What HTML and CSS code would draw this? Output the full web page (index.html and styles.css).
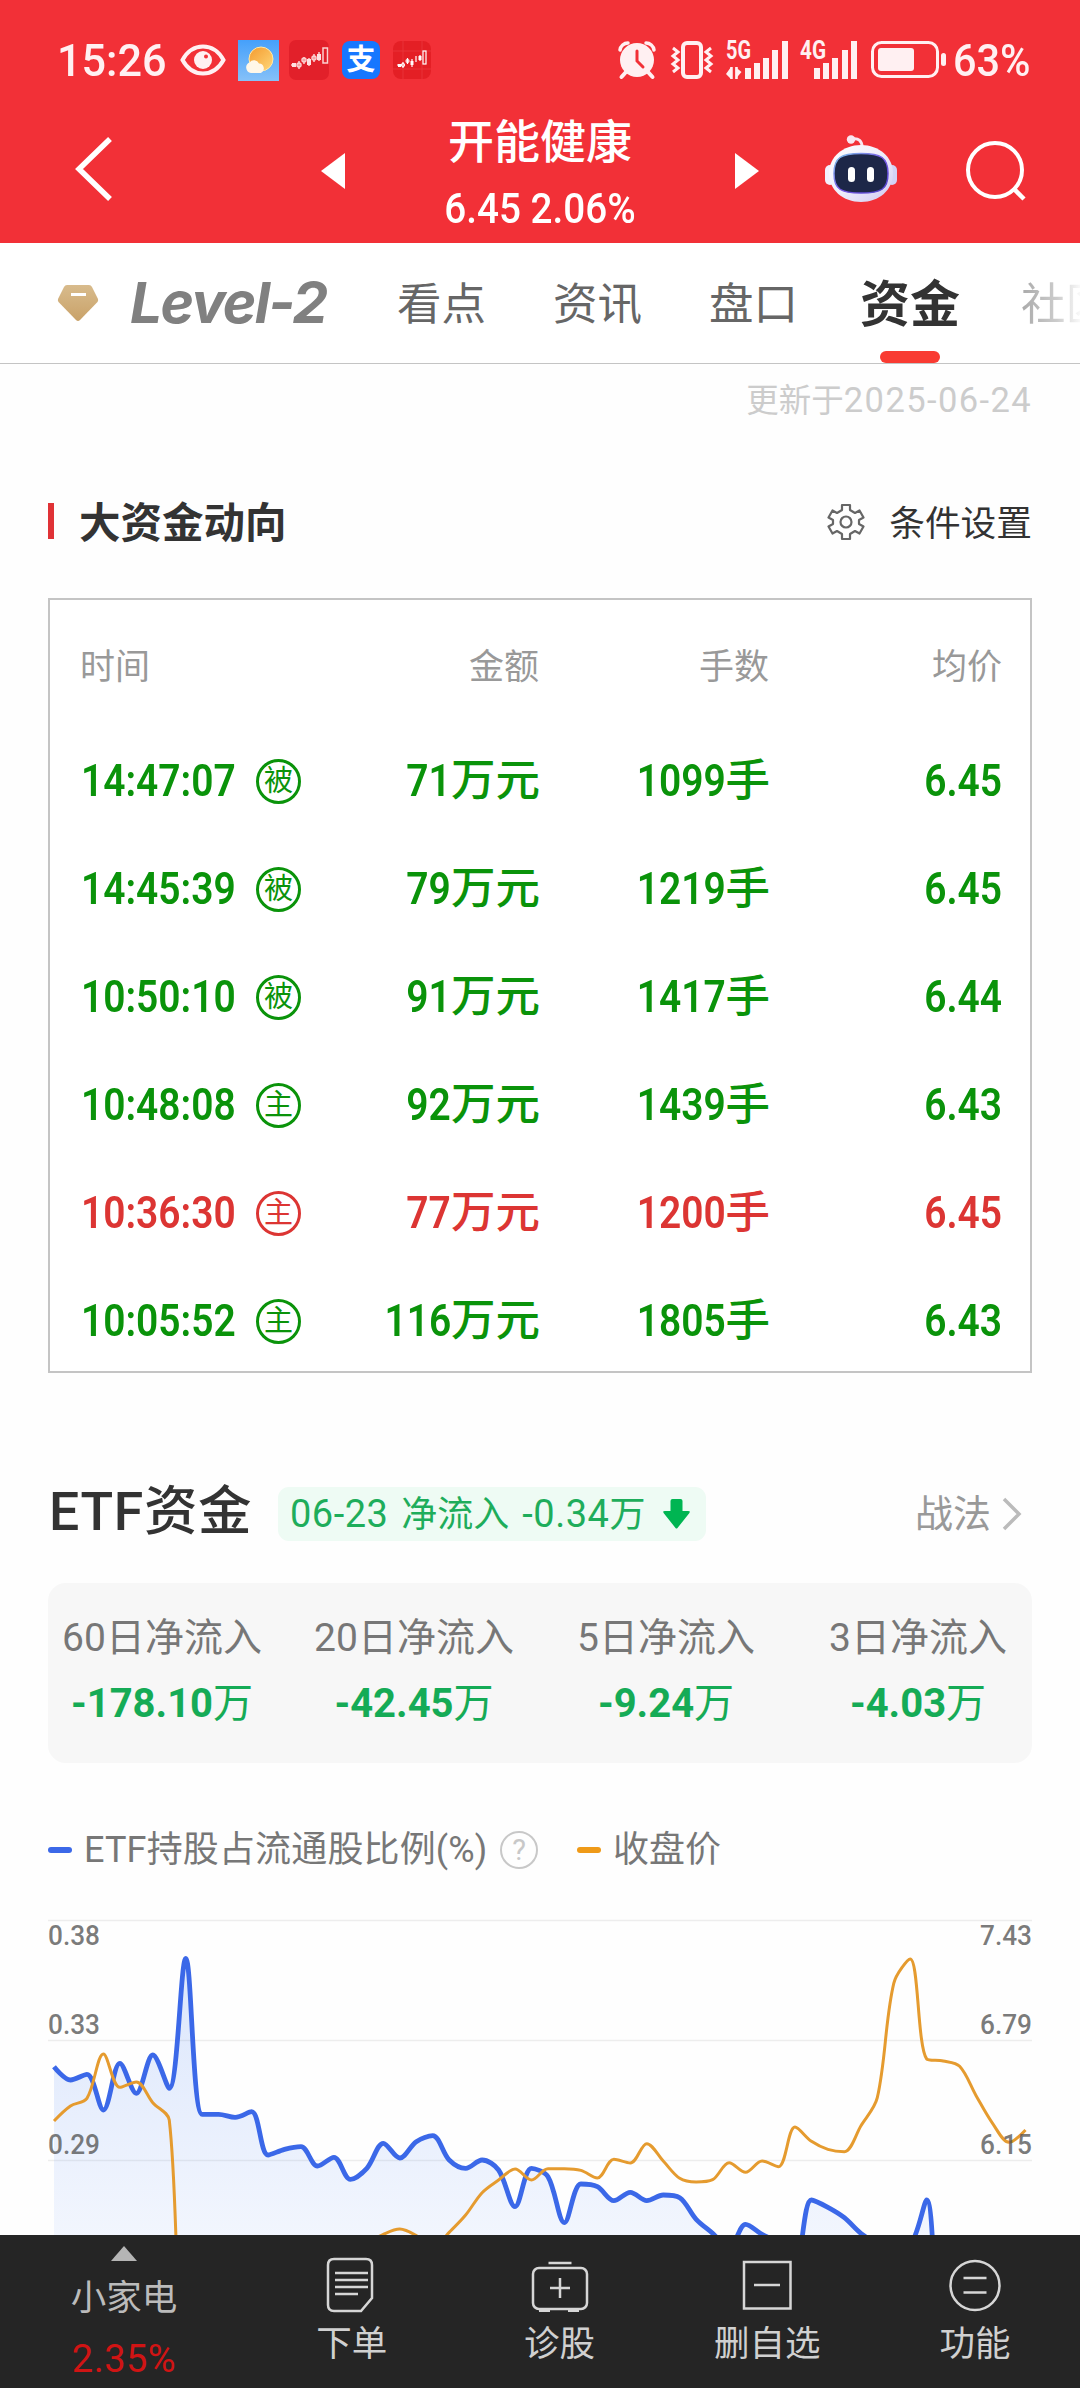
FILE: index.html
```html
<!DOCTYPE html>
<html lang="zh-CN">
<head>
<meta charset="utf-8">
<title>开能健康</title>
<link rel="stylesheet" href="styles.css">
</head>
<body>
<div class="screen">
  <header class="top">
    <div class="status">
      <div class="status-left">
        <span class="clock">15:26</span>
        <svg class="eye" width="46" height="32" viewBox="0 0 46 32"><path d="M2.500 16C8 6 15 2.500 23 2.500S38 6 43.500 16C38 26 31 29.500 23 29.500S8 26 2.500 16Z" fill="none" stroke="#fff0f2" stroke-width="4"/><circle cx="23" cy="16" r="9" fill="#fff0f2"/><circle cx="26" cy="12.500" r="2" fill="#f23037"/></svg>
        <svg class="weather" width="41" height="41" viewBox="0 0 41 41"><defs><linearGradient id="sky" x1="0" y1="0" x2="0" y2="1"><stop offset="0" stop-color="#45a0fb"/><stop offset="1" stop-color="#86c1f8"/></linearGradient><linearGradient id="sun" x1="0" y1="0" x2="1" y2="1"><stop offset="0" stop-color="#f49a2e"/><stop offset="1" stop-color="#ffd778"/></linearGradient></defs><rect width="41" height="41" fill="url(#sky)"/><circle cx="23" cy="19" r="12" fill="url(#sun)" stroke="#ffe9a8" stroke-width="1"/><path d="M13 33a5.500 5.500 0 0 1-1.500-10.500A5.500 5.500 0 0 1 21 23.500a5 5 0 0 1 2 9.500Z" fill="#fff7e8"/></svg>
        <svg class="stock-a" width="40" height="40" viewBox="0 0 40 40"><rect width="40" height="40" rx="7" fill="#e2202a"/><g stroke="#fbd0d0" stroke-width="1.500" fill="none"><path d="M2 25h5M10 21v8M15 17v7M20 18v8M25 14v8M30 12v9"/><rect x="34" y="8" width="4.500" height="15"/><circle cx="10" cy="25" r="2"/><circle cx="15" cy="20" r="2"/><circle cx="25" cy="18" r="2"/></g><path d="M3 23h4v4H3zM18 19h4v6h-4zM28 14h4v6h-4z" fill="#ffe0e0"/></svg>
        <span class="pay">支</span>
        <svg class="stock-b" width="38" height="38" viewBox="0 0 38 38"><rect width="38" height="38" rx="8" fill="#e41f25"/><path d="M0 10h38M0 28h38M10 0v38M29 0v38" stroke="#e8383c" stroke-width=".8"/><g stroke="#fff" stroke-width="1.200" fill="none"><path d="M4 24h5M10 21v6M14.500 17v6M19 18v8M23 15v6M27 14v6"/><rect x="30" y="10" width="3" height="13"/><circle cx="10" cy="24" r="1.500"/><circle cx="14.500" cy="20" r="1.500"/></g><path d="M17.500 20h3v4h-3zM25.500 15h3v4h-3zM5 23h3v3H5z" fill="#fff"/></svg>
      </div>
      <div class="status-right">
        <svg width="38" height="38" viewBox="0 0 38 38"><path d="M8 31l-4.500 5M30 31l4.500 5" stroke="#fff0f2" stroke-width="4" stroke-linecap="round"/><path d="M2 9a8 8 0 0 1 8-7" stroke="#fff0f2" stroke-width="3.500" fill="none" stroke-linecap="round"/><path d="M36 9a8 8 0 0 0-8-7" stroke="#fff0f2" stroke-width="3.500" fill="none" stroke-linecap="round"/><circle cx="19" cy="19" r="17" fill="#fff0f2"/><path d="M19 10v10l6 6" stroke="#f23037" stroke-width="3" fill="none" stroke-linecap="round"/></svg>
        <svg class="vibrate" width="42" height="38" viewBox="0 0 42 38"><rect x="12" y="2" width="18" height="34" rx="4" fill="none" stroke="#fff0f2" stroke-width="4"/><path d="M2 7l5 4-5 4 5 4-5 4 5 4-5 4M40 7l-5 4 5 4-5 4 5 4-5 4 5 4" fill="none" stroke="#fff0f2" stroke-width="3"/></svg>
        <svg class="sig-5g" width="62" height="38" viewBox="0 0 62 38"><text x="0" y="18" class="net" textLength="25" lengthAdjust="spacingAndGlyphs">5G</text><path d="M19 27h6v11h-6zM28 22h6v16h-6zM37 17h6v21h-6zM46 9h6v29h-6zM56 0h6v38h-6z" fill="#fff0f2"/><path d="M0 33l5-7v12M9.500 26v12l6-7" fill="#fff0f2"/><path d="M5.500 26v12M10.500 26v12" stroke="#fff0f2" stroke-width="2.500"/></svg>
        <svg class="sig-4g" width="57" height="38" viewBox="0 0 57 38"><text x="0" y="18" class="net" textLength="26" lengthAdjust="spacingAndGlyphs">4G</text><path d="M14 27h6v11h-6zM23 22h6v16h-6zM32 17h6v21h-6zM42 9h6v29h-6zM51 0h6v38h-6z" fill="#fff0f2"/></svg>
        <svg class="battery" width="76" height="38" viewBox="0 0 76 38"><rect x="1.500" y="1.500" width="65" height="34" rx="9" fill="none" stroke="#fff0f2" stroke-width="3"/><rect x="7" y="7" width="36" height="23" rx="3" fill="#fff0f2"/><rect x="70" y="12" width="5" height="13" rx="2.500" fill="#fff0f2"/></svg>
        <span class="percent">63%</span>
      </div>
    </div>
    <div class="titlebar">
      <svg class="back" width="40" height="68" viewBox="0 0 40 68"><path d="M36 4L5 34l31 30" fill="none" stroke="#fff" stroke-width="5.500"/></svg>
      <svg class="prev" width="24" height="36" viewBox="0 0 24 36"><path d="M24 0v36L0 18z" fill="#fff"/></svg>
      <div class="stock">
        <div class="stock-name">开能健康</div>
        <div class="stock-price">6.45 2.06%</div>
      </div>
      <svg class="next" width="24" height="36" viewBox="0 0 24 36"><path d="M0 0v36l24-18z" fill="#fff"/></svg>
      <svg class="robot" width="72" height="68" viewBox="0 0 72 68"><defs><linearGradient id="shell" x1="0" y1="0" x2="1" y2="1"><stop offset="0" stop-color="#fff"/><stop offset=".5" stop-color="#efeefb"/><stop offset="1" stop-color="#cfc8f2"/></linearGradient><linearGradient id="ring" x1="0" y1="0" x2="1" y2="1"><stop offset="0" stop-color="#7cc6e8"/><stop offset=".5" stop-color="#7a5be8"/><stop offset="1" stop-color="#4c3fc8"/></linearGradient></defs><path d="M27 4c7-1 10 2 10 8" fill="none" stroke="#f9e6f0" stroke-width="3"/><circle cx="26" cy="4.500" r="4.200" fill="#f9e6f0"/><rect x="0" y="30" width="10" height="20" rx="5" fill="#f3f0fd"/><rect x="62" y="30" width="10" height="20" rx="5" fill="#d3d2f6"/><path d="M36 10C54 10 68 22 68 38c0 17-14 29-32 29S4 55 4 38C4 22 18 10 36 10Z" fill="url(#shell)"/><path d="M36 18.500c20 0 27 4 27 20S56 58 36 58 9 54.500 9 38.500s7-20 27-20Z" fill="#1d2748" stroke="url(#ring)" stroke-width="1.500"/><rect x="23" y="32" width="7" height="15" rx="3.500" fill="#fff"/><rect x="42" y="32" width="7" height="15" rx="3.500" fill="#fff"/></svg>
      <svg class="search" width="62" height="62" viewBox="0 0 62 62"><circle cx="30" cy="30" r="27" fill="none" stroke="#fff" stroke-width="4"/><path d="M48 48l11 11" stroke="#fff" stroke-width="4.500"/></svg>
    </div>
  </header>

  <nav class="tabs">
    <svg class="gem" width="40" height="36" viewBox="0 0 40 36"><defs><linearGradient id="gold" x1="0" y1="0" x2="0" y2="1"><stop offset="0" stop-color="#d8bb8c"/><stop offset="1" stop-color="#c9a269"/></linearGradient></defs><path d="M9 0h22q2 0 3 2l6 12q.5 1.500-.5 3L22 35q-2 2-4 0L.5 17q-1-1.500-.5-3L6 2q1-2 3-2Z" fill="url(#gold)"/><rect x="13" y="8" width="15" height="3" fill="#fff"/></svg>
    <span class="tab level">Level-2</span>
    <span class="tab">看点</span>
    <span class="tab">资讯</span>
    <span class="tab">盘口</span>
    <span class="tab active">资金</span>
    <span class="tab fade">社区</span>
  </nav>

  <main class="content">
    <div class="updated">更新于<span class="date">2025-06-24</span></div>

    <div class="section-head">
      <h2>大资金动向</h2>
      <div class="settings">
        <svg width="38" height="38" viewBox="0 0 38 38" fill="none" stroke="#666" stroke-width="2.200" stroke-linejoin="round"><path d="M15 2h8v5l5 3 4.500-2.500 4 7L32 17v4l4.500 2.500-4 7L28 28l-5 3v5h-8v-5l-5-3-4.500 2.500-4-7L6 21v-4l-4.500-2.500 4-7L10 10l5-3z"/><circle cx="19" cy="19" r="5.500"/></svg>
        <span>条件设置</span>
      </div>
    </div>

    <div class="table">
      <div class="row head"><span>时间</span><span>金额</span><span>手数</span><span>均价</span></div>
      <div class="row"><span class="time"><span class="num">14:47:07</span><i>被</i></span><span><span class="num">71</span>万元</span><span><span class="num">1099</span>手</span><span class="num">6.45</span></div>
      <div class="row"><span class="time"><span class="num">14:45:39</span><i>被</i></span><span><span class="num">79</span>万元</span><span><span class="num">1219</span>手</span><span class="num">6.45</span></div>
      <div class="row"><span class="time"><span class="num">10:50:10</span><i>被</i></span><span><span class="num">91</span>万元</span><span><span class="num">1417</span>手</span><span class="num">6.44</span></div>
      <div class="row"><span class="time"><span class="num">10:48:08</span><i>主</i></span><span><span class="num">92</span>万元</span><span><span class="num">1439</span>手</span><span class="num">6.43</span></div>
      <div class="row up"><span class="time"><span class="num">10:36:30</span><i>主</i></span><span><span class="num">77</span>万元</span><span><span class="num">1200</span>手</span><span class="num">6.45</span></div>
      <div class="row"><span class="time"><span class="num">10:05:52</span><i>主</i></span><span><span class="num">116</span>万元</span><span><span class="num">1805</span>手</span><span class="num">6.43</span></div>
    </div>

    <div class="etf-head">
      <h3>ETF资金</h3>
      <div class="badge"><span><b>06-23</b> 净流入 <b>-0.34</b>万</span>
        <svg width="27" height="30" viewBox="0 0 27 30"><path d="M9.500 0h8q2 0 2 2v10h5.500q3 0 1.200 2.200L14.500 29q-1 1-2 0L.8 14.200Q-1 12 2 12h5.500V2q0-2 2-2Z" fill="#00b552"/></svg>
      </div>
      <div class="more"><span>战法</span><svg width="20" height="34" viewBox="0 0 20 34"><path d="M2 2l15 15L2 32" fill="none" stroke="#bbb" stroke-width="3.500"/></svg></div>
    </div>

    <div class="summary">
      <div class="cell"><span class="label">60日净流入</span><span class="value"><b>-178.10</b>万</span></div>
      <div class="cell"><span class="label">20日净流入</span><span class="value"><b>-42.45</b>万</span></div>
      <div class="cell"><span class="label">5日净流入</span><span class="value"><b>-9.24</b>万</span></div>
      <div class="cell"><span class="label">3日净流入</span><span class="value"><b>-4.03</b>万</span></div>
    </div>

    <div class="legend">
      <span class="dash blue"></span><span class="legend-etf">ETF持股占流通股比例(%)</span><span class="help">?</span>
      <span class="dash orange"></span><span>收盘价</span>
    </div>

    <svg class="chart" width="1080" height="335" viewBox="0 1900 1080 335">
      <defs><linearGradient id="area" gradientUnits="userSpaceOnUse" x1="0" y1="1955" x2="0" y2="2240"><stop offset="0" stop-color="#3b78f0" stop-opacity=".18"/><stop offset="1" stop-color="#3b78f8" stop-opacity=".06"/></linearGradient></defs>
      <path d="M48 1920.500h984M48 2040.500h984M48 2160.500h984" stroke="#ededed" stroke-width="1.500"/>
      <path id="etf-area" fill="url(#area)"/>
      <path id="etf-line" fill="none" stroke="#3b68e8" stroke-width="4.800" stroke-linejoin="round"/>
      <path id="price-line" fill="none" stroke="#e59b2f" stroke-width="3" stroke-linejoin="round"/>
      <g class="axis">
        <text x="48" y="1945" textLength="52" lengthAdjust="spacingAndGlyphs">0.38</text><text x="48" y="2034" textLength="52" lengthAdjust="spacingAndGlyphs">0.33</text><text x="48" y="2154" textLength="52" lengthAdjust="spacingAndGlyphs">0.29</text>
        <text x="980" y="1945" textLength="52" lengthAdjust="spacingAndGlyphs">7.43</text><text x="980" y="2034" textLength="52" lengthAdjust="spacingAndGlyphs">6.79</text><text x="980" y="2154" textLength="52" lengthAdjust="spacingAndGlyphs">6.15</text>
      </g>
    </svg>
  </main>

  <footer class="bottom">
    <div class="sector"><svg width="26" height="15" viewBox="0 0 26 15"><path d="M13 0l13 15H0z" fill="#b5b5b5"/></svg><span>小家电</span><span class="sector-change">2.35%</span></div>
    <div class="action"><svg width="58" height="56" viewBox="0 0 58 56" fill="none" stroke="#d6d6d6" stroke-width="2.500"><path d="M11 3h32q6 0 6 6v33L38 55H11q-6 0-6-6V9q0-6 6-6Z"/><path d="M12 17h33M12 24h33M12 31h33M12 38h23"/></svg><span>下单</span></div>
    <div class="action"><svg width="58" height="56" viewBox="0 0 58 56" fill="none" stroke="#d6d6d6" stroke-width="2.500"><rect x="2" y="12" width="54" height="41" rx="6"/><path d="M17.500 7h23M29 22v20M19 32h20"/><path d="M8 54.500h11M37 54.500h11" stroke-width="3"/></svg><span>诊股</span></div>
    <div class="action"><svg width="58" height="56" viewBox="0 0 58 56" fill="none" stroke="#d6d6d6" stroke-width="2.500"><rect x="6" y="6" width="46.500" height="46.500"/><path d="M16 29h26"/></svg><span>删自选</span></div>
    <div class="action"><svg width="58" height="56" viewBox="0 0 58 56" fill="none" stroke="#d6d6d6" stroke-width="2.500"><circle cx="29" cy="29.500" r="24.500"/><path d="M17.500 22h23M17.500 36.500h23"/></svg><span>功能</span></div>
  </footer>
</div>
<script src="chart.js"></script>
</body>
</html>
```
FILE: styles.css
```css
* { box-sizing: border-box; }
body { margin: 0; background: #fff; font-family: "Roboto", "Noto Sans CJK SC", sans-serif; color: #333; }
svg { display: block; flex: none; overflow: visible; }
h2, h3 { margin: 0; }
.screen { width: 1080px; height: 2388px; display: flex; flex-direction: column; overflow: hidden; background: #fefefe; white-space: nowrap; }

/* narrowed figures, anchored to the unit that follows them */
.num { display: inline-block; font-weight: 600; transform: scaleX(.875); transform-origin: right center; }

/* header */
.top { height: 243px; flex: none; background: #f23037; color: #fff; }
.status { height: 120px; padding: 0 49px 0 57px; display: flex; justify-content: space-between; align-items: center; color: #fff0f2; }
.status-left, .status-right { display: flex; align-items: center; }
.clock { width: 110px; font-size: 45px; font-weight: 500; transform: scaleX(.96); transform-origin: left center; }
.eye { margin-left: 13px; }
.weather { margin-left: 12px; }
.stock-a { margin-left: 10px; }
.pay { width: 38px; height: 38px; margin-left: 13px; border-radius: 8px; background: #1677ff; color: #fff; font-size: 29px; font-weight: 700; line-height: 38px; text-align: center; }
.stock-b { margin-left: 13px; }
.vibrate { margin-left: 15px; }
.sig-5g { margin-left: 13px; }
.sig-4g { margin-left: 12px; }
.battery { margin-left: 14px; }
.net { font-size: 26px; font-weight: 700; fill: #fff0f2; }
.percent { margin-left: 6px; width: 78px; font-size: 45px; font-weight: 500; transform: scaleX(.92); transform-origin: left center; }
.titlebar { height: 123px; display: flex; align-items: flex-start; }
.back { margin: 15px 0 0 74px; }
.prev { margin: 33px 0 0 207px; }
.stock { width: 390px; text-align: center; }
.stock-name { height: 46px; line-height: 46px; margin-top: -1px; font-size: 46px; font-weight: 500; }
.stock-price { height: 46px; line-height: 46px; margin-top: 21px; font-size: 42.500px; font-weight: 500; transform: scaleX(.91); }
.next { margin-top: 33px; }
.robot { margin: 15px 0 0 66px; }
.search { margin: 20px 0 0 68px; }

/* tabs */
.tabs { height: 121px; padding-left: 58px; display: flex; align-items: center; border-bottom: 1px solid #c4c4c4; background: #fff; overflow: hidden; flex: none; }
.tab { line-height: 60px; font-size: 44.500px; color: #666; margin-left: 67px; padding-top: 3px; flex: none; }
.level { width: 200px; margin-left: 32px; padding-top: 0; font-family: "Inter", sans-serif; font-style: italic; font-weight: 700; font-size: 57px; color: #808080; letter-spacing: -1.700px; }
.active { position: relative; margin-left: 62px; font-size: 50px; font-weight: 700; color: #333; }
.active::after { content: ""; position: absolute; left: 20px; top: 79px; width: 60px; height: 12px; border-radius: 6px; background: #f93b32; }
.fade { margin-left: 61px; color: transparent; background: linear-gradient(90deg, #aaa 0, #ccc 36px, #fff 62px); -webkit-background-clip: text; background-clip: text; }

/* content */
.content { flex: 1; display: flex; flex-direction: column; min-height: 0; }
.updated { margin: 14px 48px 0; height: 44px; line-height: 44px; text-align: right; font-size: 32.500px; color: #ccc; }
.date { font-size: 34.500px; letter-spacing: 1.400px; }
.section-head { margin: 71px 48px 0; height: 58px; display: flex; justify-content: space-between; align-items: center; }
h2 { font-size: 41.500px; font-weight: 700; line-height: 60px; padding: 3px 0 0 31px; background: linear-gradient(#e03236, #e03236) 0 12px / 6px 36px no-repeat; }
.settings { display: flex; align-items: center; gap: 24px; font-size: 35.700px; line-height: 50px; }
.settings span { padding-top: 4px; }
.table { margin: 47px 48px 0; height: 775px; border: 2px solid #c4c4c4; background: #fff; padding-top: 12px; }
.row { height: 108px; padding: 0 28px 0 31px; display: grid; grid-template-columns: 229px 230px 230px 1fr; align-items: center; text-align: right; font-size: 44.500px; line-height: 60px; font-weight: 500; color: #0a930a; }
.row.head { height: 111px; margin-bottom: 4px; font-size: 35px; font-weight: 400; color: #999; padding-left: 30px; }
.row.head span:first-child { text-align: left; }
.row.up { color: #dc3533; }
.time { display: flex; align-items: center; }
.time .num { width: 175px; text-align: left; transform-origin: left center; }
.time i { width: 45px; height: 45px; border: 3px solid; border-radius: 50%; font-style: normal; font-weight: 400; font-size: 29px; line-height: 39px; text-align: center; flex: none; }
.etf-head { margin: 109px 48px 0; height: 60px; display: flex; align-items: center; }
h3 { width: 230px; padding-left: 1px; font-size: 53.500px; font-weight: 500; line-height: 60px; letter-spacing: .7px; }
.badge { width: 428px; height: 54px; margin-top: 4px; padding: 0 16px 0 12px; border-radius: 11px; background: #eefbf4; color: #1ead5b; display: flex; align-items: center; justify-content: space-between; font-size: 36px; line-height: 54px; word-spacing: 4px; }
.badge b { font-size: 38px; font-weight: 400; letter-spacing: .5px; }
.more { margin-left: auto; padding: 4px 10px 0 0; display: flex; align-items: center; gap: 11px; font-size: 38px; line-height: 50px; color: #999; }
.summary { margin: 41px 48px 0; height: 180px; padding-top: 32px; border-radius: 18px; background: #f7f7f7; display: grid; grid-template-columns: repeat(4, 252px); justify-content: center; }
.cell { display: flex; flex-direction: column; align-items: center; }
.label { height: 46px; line-height: 46px; font-size: 39px; color: #777; }
.value { height: 46px; line-height: 46px; margin-top: 20px; font-size: 40px; color: #15ab56; }
.legend { height: 50px; margin: 62px 48px 0; display: flex; align-items: center; font-size: 36px; line-height: 50px; color: #777; }
.dash { width: 24px; height: 6px; margin-right: 12px; border-radius: 3px; }
.blue { background: #3b68e8; }
.orange { background: #ef9a18; margin-left: 39px; }
.legend-etf { width: 405px; letter-spacing: .15px; }
.help { width: 38px; height: 38px; margin-left: 11px; border: 2.500px solid #c8c8c8; border-radius: 50%; color: #c8c8c8; font-size: 29px; line-height: 34px; text-align: center; }
.chart { margin-top: 25px; overflow: hidden; }
.axis { font-size: 27px; font-weight: 500; fill: rgba(80, 80, 80, .75); }

/* bottom bar */
.bottom { height: 153px; flex: none; background: #252525; display: grid; grid-template-columns: 248px repeat(4, 207.750px); color: #d0d0d0; font-size: 35.500px; }
.sector, .action { display: flex; flex-direction: column; align-items: center; }
.sector { padding-top: 11px; color: #bbb; }
.sector span { height: 50px; line-height: 50px; margin-top: 12px; }
.sector .sector-change { margin-top: 11px; font-size: 38px; color: #d01414; letter-spacing: .5px; }
.action { padding-top: 21px; }
.action span { height: 50px; line-height: 50px; margin-top: 7px; }
```
FILE: chart.js
```js
// Pixel heights of both series below the top of the plot, three units per pixel.
const etf = [800, 840, 823, 930, 790, 880, 765, 865, 475, 943, 943, 952, 935, 1065, 1048, 1040, 1098, 1072, 1138, 1105,
  1030, 1074, 1025, 1007, 1080, 1105, 1080, 1110, 1220, 1105, 1130, 1268, 1152, 1160, 1202, 1177, 1202, 1185, 1193, 1258,
  1300, 1345, 1273, 1303, 1330, 1390, 1200, 1222, 1253, 1300, 1330, 1345, 1335, 1200, 1650, 1650, 1650, 1650, 1650, 1650];
const price = [963, 918, 895, 762, 862, 846, 908, 960, 1760, 1760, 1700, 1650, 1600, 1550, 1500, 1450, 1420, 1390, 1360, 1330,
  1303, 1287, 1307, 1345, 1297, 1245, 1178, 1140, 1107, 1140, 1106, 1106, 1111, 1134, 1078, 1089, 1031, 1083, 1135, 1146,
  1139, 1088, 1117, 1083, 1100, 981, 1024, 1048, 1055, 978, 893, 550, 477, 777, 783, 799, 887, 970, 1027, 990];

const START = 54;
const STEP = 16.466;
const SMOOTH = 0.33;

// Smooth bezier path whose control points never overshoot the neighbouring values.
function smooth(values) {
  const p = values.map((v, i) => [START + i * STEP, 1800 + v / 3]);
  const between = (v, a, b) => Math.min(Math.max(v, Math.min(a, b)), Math.max(a, b));
  let out = p[0];
  let d = `M${p[0]}`;
  for (let i = 1; i < p.length; i++) {
    const cur = p[i], prev = p[i - 1], next = p[i + 1];
    let into = cur, leave = cur;
    if (next) {
      const a = Math.hypot(cur[0] - prev[0], cur[1] - prev[1]);
      const b = Math.hypot(next[0] - cur[0], next[1] - cur[1]);
      const r = b / (a + b);
      leave = [0, 1].map(k => between(cur[k] + (next[k] - prev[k]) * SMOOTH * r, next[k], cur[k]));
      into = [0, 1].map(k => between(cur[k] - (leave[k] - cur[k]) * a / b, prev[k], cur[k]));
      leave = [0, 1].map(k => cur[k] + (cur[k] - into[k]) * b / a);
    }
    d += `C${out} ${into} ${cur}`;
    out = leave;
  }
  return d;
}

const line = smooth(etf);
document.getElementById('etf-line').setAttribute('d', line);
document.getElementById('etf-area').setAttribute('d', `${line}V2600H${START}Z`);
document.getElementById('price-line').setAttribute('d', smooth(price));
```
